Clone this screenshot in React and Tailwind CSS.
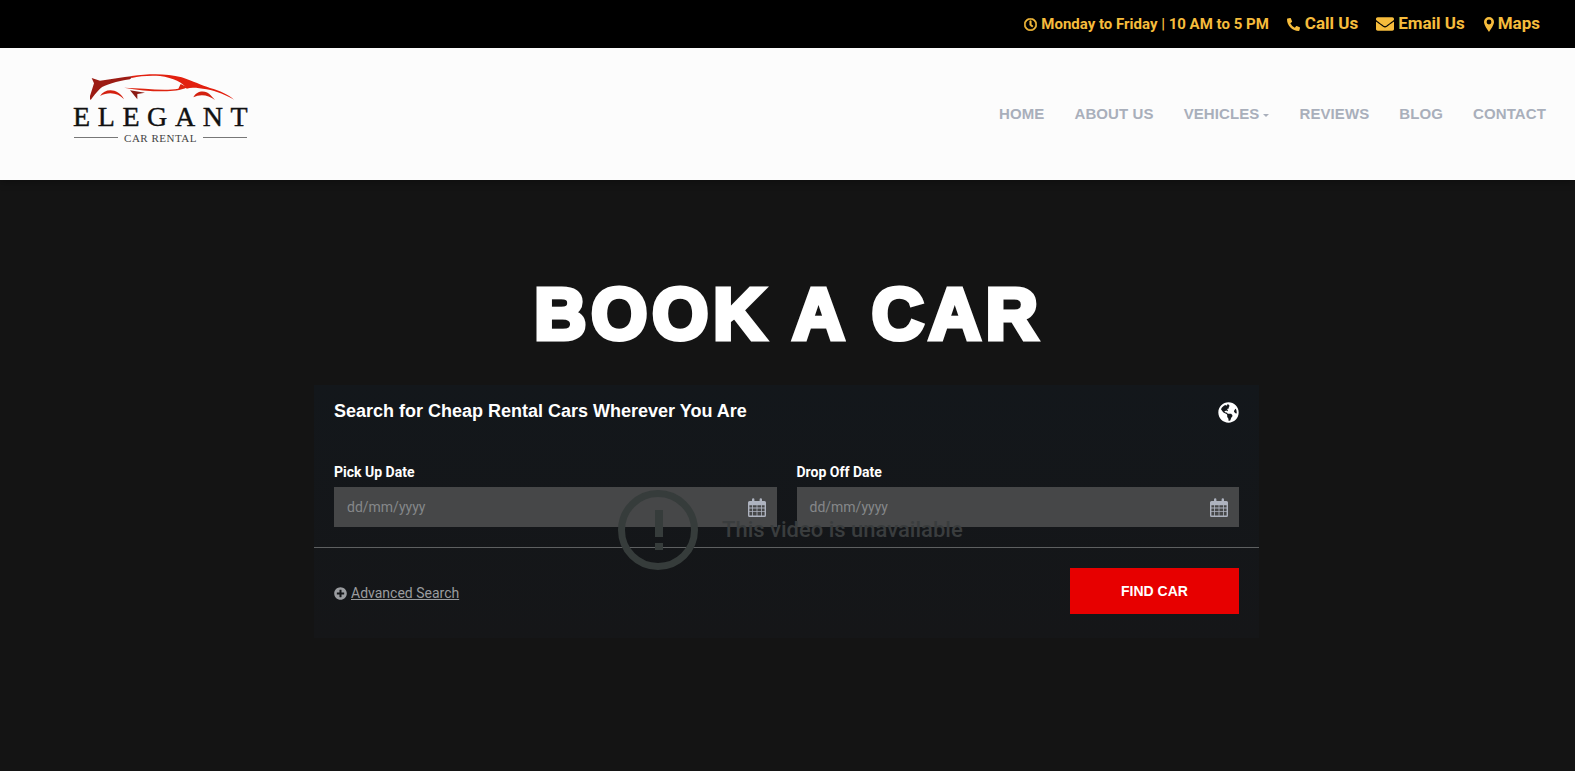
import { FaPhoneAlt, FaEnvelope, FaRegClock, FaGlobeAmericas, FaPlusCircle } from "react-icons/fa";

function CalendarIcon() {
  return (
    <svg width="18" height="19" viewBox="0 0 18 19" className="text-[#aeb3bf]">
      <path
        fill="currentColor"
        fillRule="evenodd"
        d="M1.5 3H4V1.5a1.2 1.2 0 0 1 2.4 0V3h5.2V1.5a1.2 1.2 0 0 1 2.4 0V3h2.5A1.5 1.5 0 0 1 18 4.5v13a1.5 1.5 0 0 1-1.5 1.5h-15A1.5 1.5 0 0 1 0 17.5v-13A1.5 1.5 0 0 1 1.5 3ZM1.4 7.2v2.4h2.7V7.2Zm3.5 0v2.4h3.7V7.2Zm4.5 0v2.4h3.7V7.2Zm4.5 0v2.4h2.7V7.2ZM1.4 10.4v2.6h2.7v-2.6Zm3.5 0v2.6h3.7v-2.6Zm4.5 0v2.6h3.7v-2.6Zm4.5 0v2.6h2.7v-2.6ZM1.4 13.8v3.6h2.7v-3.6Zm3.5 0v3.6h3.7v-3.6Zm4.5 0v3.6h3.7v-3.6Zm4.5 0v3.6h2.7v-3.6Z"
      />
    </svg>
  );
}

function PinIcon() {
  return (
    <svg width="10" height="15" viewBox="0 0 10 15" className="ml-px">
      <path
        fill="currentColor"
        fillRule="evenodd"
        d="M5 0a5 5 0 0 1 5 5c0 2.6-3 7.2-5 10C3 12.200 0 7.600 0 5a5 5 0 0 1 5-5Zm0 2.600a2.400 2.400 0 1 0 0 4.800 2.400 2.400 0 0 0 0-4.800Z"
      />
    </svg>
  );
}

function Logo() {
  return (
    <div className="mb-[13px] flex w-[175px] flex-col">
      <svg width="145" height="30" viewBox="120 50 435 90" className="ml-[17px]">
        <path d="M125 68 L150 76 C185 72 215 66 250 62 L240 72 C200 78 165 88 150 100 C138 112 130 122 122 134 L118 128 L132 84 Z" fill="#9c1c14" />
        <path d="M245 62 C300 54 350 54 395 66 C430 78 455 90 480 98 C510 106 535 118 552 133 C530 120 500 108 470 102 C445 98 425 95 410 100 C400 82 370 68 330 62 C300 60 270 62 245 68 Z" fill="#e2200f" />
        <path d="M150 122 C165 98 205 98 222 132 C205 112 175 108 150 122 Z" fill="#d3200f" />
        <path d="M222 97 C280 98 340 108 385 100 L392 86 L412 96 C390 106 370 108 340 108 C300 108 260 104 222 97 Z" fill="#dd2410" />
        <path d="M240 105 L285 112 L262 116 L262 132 Z" fill="#8c1b14" />
        <path d="M430 126 C440 104 470 104 482 120 L495 134 C475 118 450 115 430 126 Z" fill="#d3200f" />
      </svg>
      <div className="font-['Liberation_Serif',serif] text-[28px] leading-[30px] tracking-[7.6px] text-[#111] whitespace-nowrap [-webkit-text-stroke:0.4px_#111]">
        ELEGANT
      </div>
      <div className="flex items-center gap-[6px] px-[1px]">
        <div className="h-px flex-1 bg-[#777]" />
        <span className="font-['Liberation_Serif',serif] text-[11px] leading-3 tracking-[0.5px] text-[#444] whitespace-nowrap">CAR RENTAL</span>
        <div className="h-px flex-1 bg-[#777]" />
      </div>
    </div>
  );
}

function DateField({ label }) {
  return (
    <div>
      <p className="mb-[5px] font-['Roboto',sans-serif] text-[14px] font-bold leading-[20px] text-white">{label}</p>
      <div className="flex h-10 items-center justify-between bg-[#464748] pl-[13px] pr-[11px]">
        <span className="font-['Roboto',sans-serif] text-[14px] text-[#85878a]">dd/mm/yyyy</span>
        <CalendarIcon />
      </div>
    </div>
  );
}

export default function App() {
  return (
    <div className="relative flex h-[771px] flex-col overflow-hidden bg-[#141414]">
      {/* TOP BAR */}
      <div className="flex h-12 items-center justify-end gap-[18px] bg-black pr-[35px] font-['Roboto',sans-serif] font-bold text-[#f6bc3c]">
        <div className="flex items-center gap-1 text-[15px]">
          <FaRegClock size={13} stroke="currentColor" strokeWidth={24} />
          <span>Monday to Friday | 10 AM to 5 PM</span>
        </div>
        <div className="flex items-center gap-[5px] text-[17px]">
          <FaPhoneAlt size={13} />
          <span>Call Us</span>
        </div>
        <div className="flex items-center gap-1 text-[17px]">
          <FaEnvelope size={18} />
          <span>Email Us</span>
        </div>
        <div className="flex items-center gap-1 text-[17px]">
          <PinIcon />
          <span>Maps</span>
        </div>
      </div>

      {/* NAV */}
      <header className="z-10 flex h-[132px] items-center justify-between bg-[#fcfcfc] pl-[73px] pr-[29px] shadow-[0_2px_8px_rgba(0,0,0,0.3)]">
        <Logo />
        <nav className="flex items-center gap-[30px] font-['Liberation_Sans',sans-serif] text-[15px] font-bold tracking-[0.1px] text-[#a9afbb]">
          <span>HOME</span>
          <span>ABOUT US</span>
          <span className="flex items-center gap-1">
            VEHICLES
            <span className="mt-[2px] h-0 w-0 border-x-[3px] border-t-[3px] border-x-transparent border-t-[#a9afbb]" />
          </span>
          <span>REVIEWS</span>
          <span>BLOG</span>
          <span>CONTACT</span>
        </nav>
      </header>

      {/* HERO */}
      <main className="flex flex-col items-center">
        <h1 className="ml-[2px] mt-[91px] font-['Liberation_Sans',sans-serif] text-[72px] font-bold leading-[86px] tracking-[5px] text-white [-webkit-text-stroke:5px_white]">
          BOOK A CAR
        </h1>

        <section className="-ml-[2px] mt-[28px] h-[253px] w-[945px] bg-linear-to-b from-[#13171b] to-[#151618]">
          <div className="flex items-center justify-between px-5 pt-[13px]">
            <h2 className="font-['Liberation_Sans',sans-serif] text-[18px] font-bold leading-[20px] text-white">
              Search for Cheap Rental Cars Wherever You Are
            </h2>
            <FaGlobeAmericas size={21} className="mt-1 text-white" />
          </div>
          <div className="mt-[39px] grid grid-cols-2 gap-5 px-5">
            <DateField label="Pick Up Date" />
            <DateField label="Drop Off Date" />
          </div>
          <div className="mt-5 h-px bg-[#5e6061]" />
          <div className="flex items-center justify-between px-5 pt-5">
            <div className="mt-1 flex items-center gap-1 font-['Roboto',sans-serif] text-[14px] text-[#9a9c9f]">
              <FaPlusCircle size={13} />
              <span className="underline">Advanced Search</span>
            </div>
            <button className="h-[46px] w-[169px] bg-[#e70000] font-['Liberation_Sans',sans-serif] text-[14px] font-bold text-white">
              FIND CAR
            </button>
          </div>
        </section>
      </main>

      {/* unavailable video message sits over the form */}
      <div className="pointer-events-none absolute left-[618px] top-[490px] flex items-center gap-[24px]">
        <div className="relative h-20 w-20 rounded-full border-[7px] border-[#363c3b]">
          <div className="absolute left-[30px] top-[13px] h-[27px] w-[8px] bg-[#363c3b]" />
          <div className="absolute left-[30px] top-[46px] h-[7px] w-[8px] bg-[#363c3b]" />
        </div>
        <span className="mb-[2px] font-['Roboto',sans-serif] text-[22px] font-medium text-[#3a3d3e] whitespace-nowrap">This video is unavailable</span>
      </div>
    </div>
  );
}
